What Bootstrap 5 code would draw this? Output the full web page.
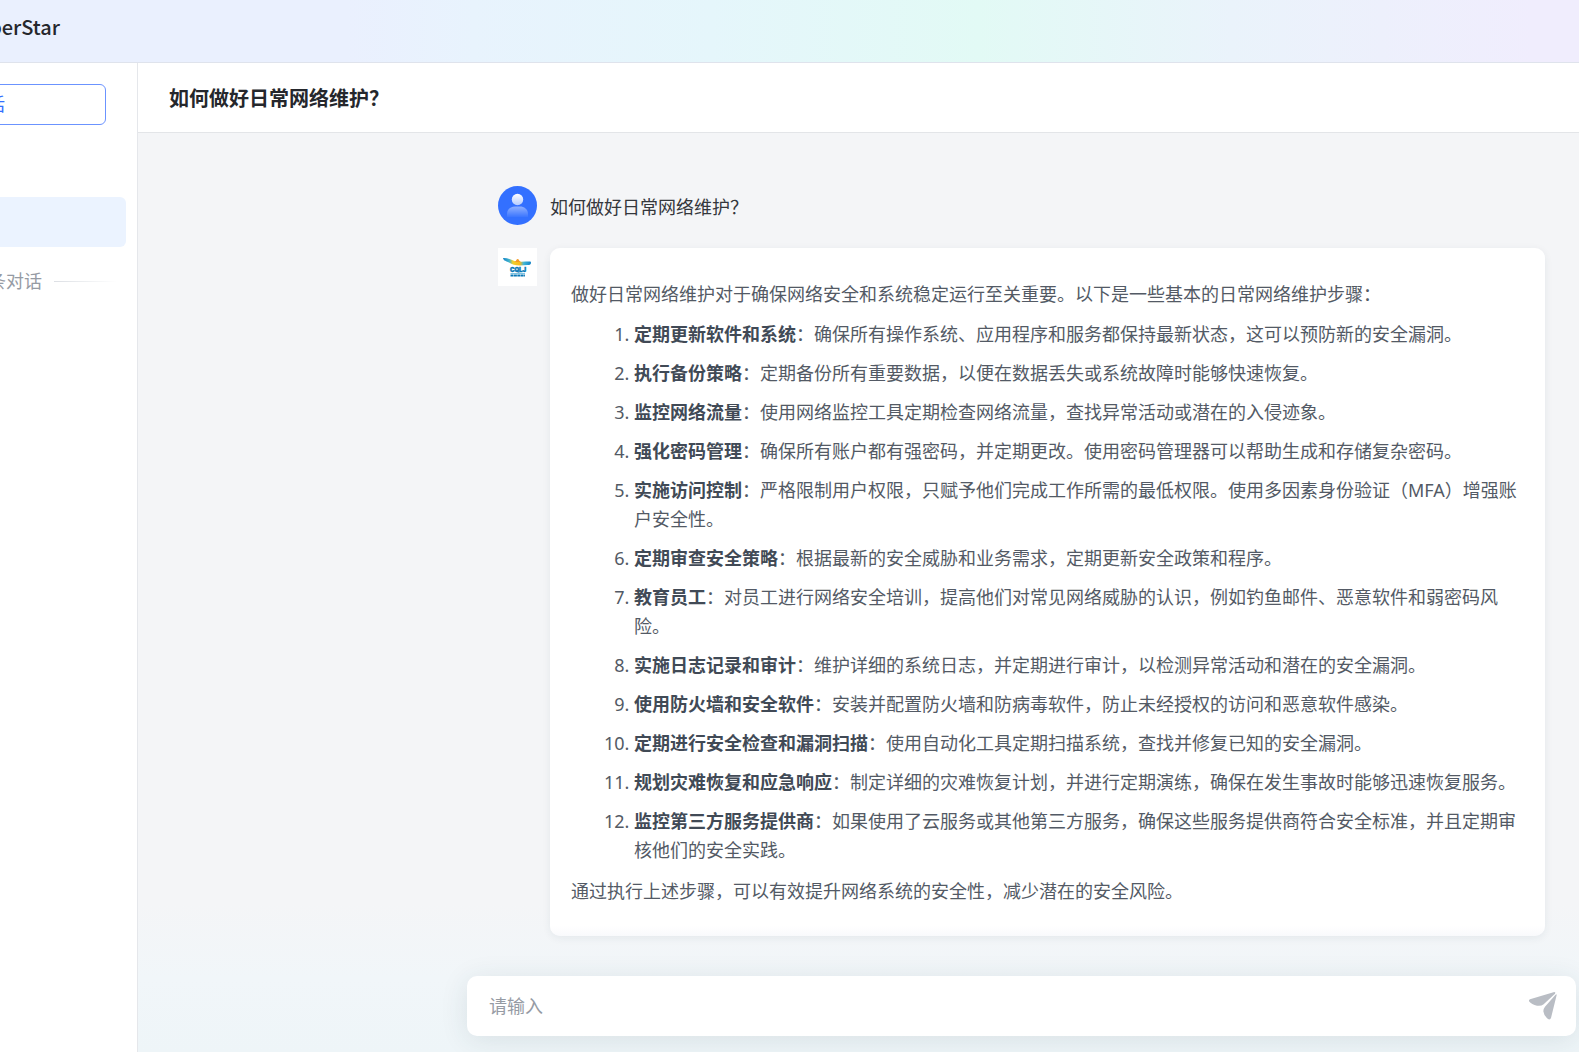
<!DOCTYPE html>
<html lang="zh-CN">
<head>
<meta charset="utf-8">
<meta name="viewport" content="width=device-width, initial-scale=1">
<title>如何做好日常网络维护？</title>
<link href="https://cdn.jsdelivr.net/npm/bootstrap@5.3.0/dist/css/bootstrap.min.css" rel="stylesheet">
<style>
body{font-family:"Noto Sans","Noto Sans CJK SC",sans-serif;font-size:18px;line-height:29px;color:#535a65;background:#fff}
.topbar{height:63px;border-bottom:1px solid #dfe3ec;background:linear-gradient(90deg,#eaf0fe 0%,#eaf0fe 22%,#e8f3fd 30%,#e5f6fb 45%,#e2faf5 62%,#eaf3fb 78%,#f0edfd 97%)}
.brand{font-family:"Noto Sans CJK SC",sans-serif;font-size:20px;font-weight:500;color:#25272c;width:60px;margin-bottom:10px}
.side{width:138px;border-right:1px solid #e5e7eb;padding-top:21px}
.newchat{width:230px;height:41px;border:1px solid #6b93ff;border-radius:6px;color:#3370ff;background:#fff;padding:0 100px 0 0;margin:0 31px 72px 0;line-height:29px}
.picked{width:240px;height:50px;border-radius:6px;background:#ebf3ff;margin:0 11px 20px 0}
.count{color:#969ba4;gap:12px;margin-right:20px}
.fade-rule{width:63px;height:1px;background:linear-gradient(90deg,#dcdfe4,#fff)}
.titlebar{height:70px;border-bottom:1px solid #e3e5e8;padding:3px 31px 0}
.titlebar h1{font-size:20px;line-height:30px;font-weight:700;color:#25272c}
.stage{background:linear-gradient(180deg,#f4f5f7 0%,#f4f5f7 84%,#f1f6f9 92%,#eef5f8 100%)}
.thread{padding:53px 34px 0 360px}
.msg{gap:13px}
.asked{margin-bottom:23px}
.pic{width:39px}
.question{color:#34373c;padding-top:3px}
.answer{border-radius:10px;padding:32px 26px 30px 21px;box-shadow:0 2px 8px rgba(30,50,70,.07);background:linear-gradient(0deg,#f9fafc,#fff 10px)}
.answer p{margin-bottom:11px}
.answer ol{padding-left:63px;margin-bottom:12px}
.answer li+li{margin-top:10px}
.answer strong{color:#414a56}
.composer{margin:40px 3px 16px 329px;height:60px;border-radius:10px;background:#fff;padding:0 18px 0 22px;box-shadow:0 4px 28px rgba(40,60,70,.11)}
.composer input{font-size:18px;line-height:29px;color:#34373c;outline:0}
.composer input::placeholder{color:#969ba4;opacity:1}
</style>
<script src="https://cdn.jsdelivr.net/npm/bootstrap@5.3.0/dist/js/bootstrap.bundle.min.js"></script>
</head>
<body class="d-flex flex-column min-vh-100">
<header class="topbar d-flex align-items-center overflow-hidden">
  <div class="brand d-flex justify-content-end">berStar</div>
</header>
<div class="d-flex flex-grow-1">
  <aside class="side d-flex flex-column align-items-end flex-shrink-0 overflow-hidden">
    <button type="button" class="newchat flex-shrink-0 text-end">话</button>
    <a href="#" class="picked flex-shrink-0" aria-label="当前对话"></a>
    <div class="count d-flex align-items-center text-nowrap"><span>条对话</span><span class="fade-rule"></span></div>
  </aside>
  <main class="flex-grow-1 d-flex flex-column">
    <div class="titlebar d-flex align-items-center"><h1 class="m-0">如何做好日常网络维护？</h1></div>
    <div class="stage flex-grow-1 d-flex flex-column">
      <div class="thread d-flex flex-column">
        <div class="msg asked d-flex align-items-center">
          <svg class="pic flex-shrink-0" height="39" viewBox="0 0 39 39" role="img" aria-label="用户">
            <defs>
              <linearGradient id="hd" x1="0" y1="0" x2="0" y2="1"><stop offset="0" stop-color="#fff"/><stop offset="1" stop-color="#b4cbff"/></linearGradient>
              <linearGradient id="bd" x1="0" y1="0" x2="0" y2="1"><stop offset="0" stop-color="#8fb0ff"/><stop offset="1" stop-color="#3b76ff"/></linearGradient>
            </defs>
            <circle cx="19.500" cy="19.500" r="19.500" fill="#3370ff"/>
            <path d="M9 31v-3c0-5 4-7.500 8-7.500h5c4 0 8 2.500 8 7.500v3z" fill="url(#bd)"/>
            <circle cx="19.500" cy="13.500" r="6.300" fill="#3370ff"/>
            <circle cx="19.500" cy="13.500" r="5.700" fill="url(#hd)"/>
          </svg>
          <div class="question">如何做好日常网络维护？</div>
        </div>
        <div class="msg d-flex align-items-start">
          <svg class="pic flex-shrink-0" height="38" viewBox="0 0 39 38" role="img" aria-label="CQLJ">
            <defs><linearGradient id="wing" x1="0" y1="0" x2="1" y2="0"><stop offset="0" stop-color="#1583c6"/><stop offset=".22" stop-color="#3fb3cf"/><stop offset=".35" stop-color="#f2cf2c"/><stop offset=".6" stop-color="#f9b91f"/><stop offset=".74" stop-color="#3fb8d8"/><stop offset="1" stop-color="#1583c6"/></linearGradient></defs>
            <rect width="39" height="38" fill="#fff"/>
            <path d="M5 10c4-.3 8 1.500 12 3.200 5 .9 10 .3 15.500.3 1.200 1.200.3 3.500-1.500 3.500-3-.3-6 .4-9 .4-5 0-8-1-11-3-2.500-1.200-5.500-1.400-6-4.400z" fill="url(#wing)"/>
            <path d="M16.500 14c1.200-.4 1.500-1.200 2-2.200.5-1 2-1 2.300 0 .4 1 1 1.700 2.200 2.200z" fill="#f59a23"/>
            <text x="20" y="24" text-anchor="middle" font-family="Inter,sans-serif" font-size="6" font-weight="900" fill="#0b78b6" stroke="#0b78b6" stroke-width=".4">CQLJ</text>
            <path d="M12.500 25.500h14.500" stroke="#58b4dc" stroke-width=".8"/>
            <path d="M12.500 27.500h14.500" stroke="#0b78b6" stroke-width="2.200" stroke-dasharray="3 .4"/>
          </svg>
          <div class="answer flex-grow-1">
            <p>做好日常网络维护对于确保网络安全和系统稳定运行至关重要。以下是一些基本的日常网络维护步骤：</p>
            <ol>
              <li><strong>定期更新软件和系统</strong>：确保所有操作系统、应用程序和服务都保持最新状态，这可以预防新的安全漏洞。</li>
              <li><strong>执行备份策略</strong>：定期备份所有重要数据，以便在数据丢失或系统故障时能够快速恢复。</li>
              <li><strong>监控网络流量</strong>：使用网络监控工具定期检查网络流量，查找异常活动或潜在的入侵迹象。</li>
              <li><strong>强化密码管理</strong>：确保所有账户都有强密码，并定期更改。使用密码管理器可以帮助生成和存储复杂密码。</li>
              <li><strong>实施访问控制</strong>：严格限制用户权限，只赋予他们完成工作所需的最低权限。使用多因素身份验证（MFA）增强账户安全性。</li>
              <li><strong>定期审查安全策略</strong>：根据最新的安全威胁和业务需求，定期更新安全政策和程序。</li>
              <li><strong>教育员工</strong>：对员工进行网络安全培训，提高他们对常见网络威胁的认识，例如钓鱼邮件、恶意软件和弱密码风险。</li>
              <li><strong>实施日志记录和审计</strong>：维护详细的系统日志，并定期进行审计，以检测异常活动和潜在的安全漏洞。</li>
              <li><strong>使用防火墙和安全软件</strong>：安装并配置防火墙和防病毒软件，防止未经授权的访问和恶意软件感染。</li>
              <li><strong>定期进行安全检查和漏洞扫描</strong>：使用自动化工具定期扫描系统，查找并修复已知的安全漏洞。</li>
              <li><strong>规划灾难恢复和应急响应</strong>：制定详细的灾难恢复计划，并进行定期演练，确保在发生事故时能够迅速恢复服务。</li>
              <li><strong>监控第三方服务提供商</strong>：如果使用了云服务或其他第三方服务，确保这些服务提供商符合安全标准，并且定期审核他们的安全实践。</li>
            </ol>
            <p class="mb-0">通过执行上述步骤，可以有效提升网络系统的安全性，减少潜在的安全风险。</p>
          </div>
        </div>
      </div>
      <form class="composer d-flex align-items-center">
        <input type="text" class="border-0 p-0 flex-grow-1 bg-transparent" placeholder="请输入" aria-label="请输入">
        <button type="button" class="btn p-0 border-0 d-flex" aria-label="发送">
          <svg width="30" height="30" viewBox="-3 -3 90 90" fill="#b9bdc4">
            <path d="M3 22L76 0Q81 0 78 5L44 37Q36 43 24 41Q8 38 0 28Q-1 24 3 22z"/>
            <path d="M83 9L66 78Q63 85 57 81Q44 70 43 58Q43 50 48 44L79 9Q83 4 83 9z"/>
          </svg>
        </button>
      </form>
    </div>
  </main>
</div>
</body>
</html>
